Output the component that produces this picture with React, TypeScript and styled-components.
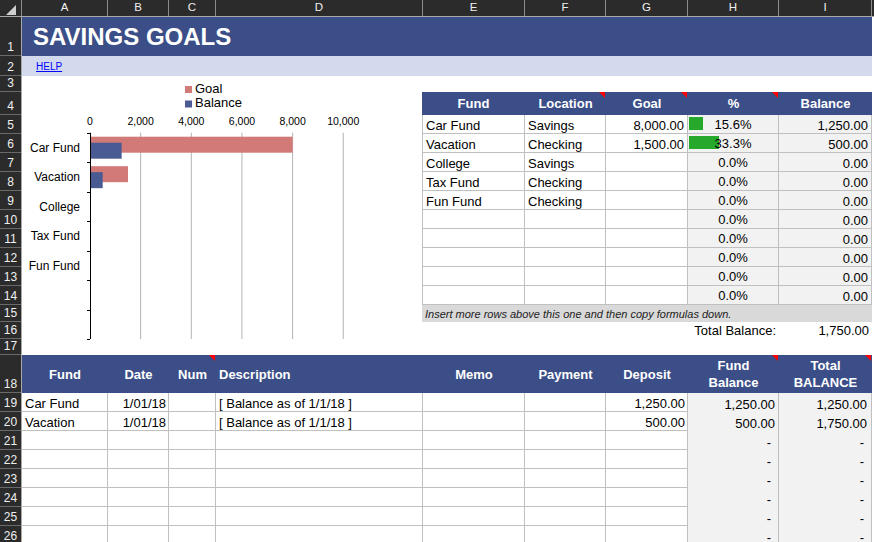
import React from 'react';
import styled, { createGlobalStyle } from 'styled-components';

const GRID = '#c0c0c0';
const NAVY = '#3b4e87';
const SHADE = '#f2f2f2';

const GlobalStyle = createGlobalStyle`
  html, body { margin: 0; padding: 0; background: #fff; overflow: hidden; }
  body { font-family: 'Liberation Sans', Arial, sans-serif; color: #000; }
  * { box-sizing: border-box; }
`;

const COLS = [
  { id: 'A', w: 86 },
  { id: 'B', w: 61 },
  { id: 'C', w: 47 },
  { id: 'D', w: 207 },
  { id: 'E', w: 102 },
  { id: 'F', w: 81 },
  { id: 'G', w: 82 },
  { id: 'H', w: 91 },
  { id: 'I', w: 93 },
  { id: 'J', w: 40 },
];

const ROW_HEIGHTS = [39, 20, 16, 23, 19, 19, 19, 19, 19, 19, 19, 19, 19, 19, 17, 17, 16, 38, 19, 19, 19, 19, 19, 19, 19, 19];

/* ---------- frame & headers ---------- */

const Frame = styled.div`
  width: 874px;
  height: 542px;
  overflow: hidden;
  background: #fff;
  display: flex;
  flex-direction: column;
`;

const ColumnHeaderBar = styled.div`
  display: flex;
  flex: none;
  height: 17px;
  background: #2b2b2b;
  border-bottom: 1px solid #a8a8a8;
`;

const Corner = styled.div`
  width: 22px;
  flex: none;
  display: flex;
  align-items: flex-end;
  justify-content: flex-end;
  padding: 0 5px 1px 0;
  border-right: 1px solid #8c8c8c;
`;

const ColLetter = styled.div<{ $w: number }>`
  width: ${(p) => p.$w}px;
  flex: none;
  display: flex;
  align-items: center;
  justify-content: center;
  border-right: 1px solid #8c8c8c;
  color: #f0f0f0;
  font-size: 11.5px;
  line-height: 1;
`;

const Body = styled.div`
  display: flex;
  flex: 1;
  min-height: 0;
`;

const RowHeaderColumn = styled.div`
  width: 22px;
  flex: none;
  display: flex;
  flex-direction: column;
  background: #2b2b2b;
  border-right: 1px solid #a8a8a8;
`;

const RowNumber = styled.div<{ $h: number }>`
  height: ${(p) => p.$h}px;
  flex: none;
  display: flex;
  align-items: flex-end;
  justify-content: center;
  padding-bottom: 1px;
  border-bottom: 1px solid #6a6a6a;
  color: #f0f0f0;
  font-size: 12px;
  line-height: 14px;
`;

const Content = styled.div`
  width: 850px;
  flex: none;
  display: flex;
  flex-direction: column;
`;

/* ---------- title ---------- */

const TitleBand = styled.div`
  height: 39px;
  flex: none;
  display: flex;
  align-items: center;
  padding-left: 11px;
  background: ${NAVY};
`;

const Title = styled.h1`
  margin: 0;
  color: #fff;
  font-size: 24px;
  font-weight: 700;
  line-height: 1;
  padding-top: 1px;
`;

const HelpBand = styled.div`
  height: 20px;
  flex: none;
  display: flex;
  align-items: center;
  padding-left: 14px;
  background: #d4daed;
`;

const HelpLink = styled.a`
  color: #0000ff;
  font-size: 10px;
  text-decoration: underline;
  cursor: pointer;
`;

/* ---------- middle ---------- */

const MidSection = styled.div`
  display: flex;
  height: 279px;
  flex: none;
`;

const ChartPanel = styled.div`
  width: 400px;
  flex: none;
`;

const FundsPanel = styled.div`
  width: 450px;
  flex: none;
  display: flex;
  flex-direction: column;
  padding-top: 16px;
`;

const FundsGrid = styled.div`
  display: grid;
  grid-template-columns: 103px 81px 82px 91px 93px;
  grid-template-rows: 23px;
  grid-auto-rows: 19px;
`;

const HeadCell = styled.div<{ $align?: 'left' | 'center' }>`
  position: relative;
  display: flex;
  align-items: center;
  justify-content: ${(p) => (p.$align === 'left' ? 'flex-start' : 'center')};
  padding: 0 3px;
  background: ${NAVY};
  color: #fff;
  font-size: 13px;
  font-weight: 700;
  line-height: 17px;
  text-align: center;
  white-space: nowrap;
`;

const Marker = styled.span`
  position: absolute;
  top: 0;
  right: 1px;
  width: 0;
  height: 0;
  border-left: 6px solid transparent;
  border-top: 6px solid #ff0000;
`;

type Align = 'left' | 'right' | 'center';

const Cell = styled.div<{ $align?: Align; $shade?: boolean; $first?: boolean; $open?: boolean; $pad?: number }>`
  position: relative;
  display: flex;
  align-items: flex-end;
  justify-content: ${(p) => (p.$align === 'right' ? 'flex-end' : p.$align === 'center' ? 'center' : 'flex-start')};
  padding: 0 ${(p) => p.$pad ?? 3}px 0 3px;
  background: ${(p) => (p.$shade ? SHADE : '#fff')};
  border-right: 1px solid ${GRID};
  border-bottom: ${(p) => (p.$open ? 'none' : `1px solid ${GRID}`)};
  border-left: ${(p) => (p.$first ? `1px solid ${GRID}` : 'none')};
  font-size: 13px;
  line-height: 14px;
  white-space: nowrap;
  overflow: hidden;
`;

const PercentCell = styled(Cell)`
  align-items: center;
  padding-top: 2px;
`;

const DataBar = styled.span`
  position: absolute;
  left: 1px;
  top: 2px;
  bottom: 3px;
  background: #26a82a;
`;

const PercentText = styled.span`
  position: relative;
`;

const NoteRow = styled.div`
  height: 17px;
  flex: none;
  display: flex;
  align-items: center;
  padding-left: 3px;
  background: #d9d9d9;
  color: #222;
  font-size: 11px;
  font-style: italic;
`;

const TotalRow = styled.div`
  height: 17px;
  flex: none;
  display: grid;
  grid-template-columns: 103px 81px 82px 91px 93px;
  align-items: center;
  font-size: 13px;
`;

const TotalLabel = styled.div`
  grid-column: 4;
  justify-self: end;
  padding-right: 3px;
  white-space: nowrap;
`;

const TotalValue = styled.div`
  grid-column: 5;
  justify-self: end;
  padding-right: 3px;
`;

/* ---------- ledger ---------- */

const LedgerGrid = styled.div`
  display: grid;
  grid-template-columns: 86px 61px 47px 207px 102px 81px 82px 91px 93px;
  grid-template-rows: 38px;
  grid-auto-rows: 19px;
`;

/* ---------- chart ---------- */

const AXIS_X = 68;
const PX_PER_UNIT = 50.65 / 2000;
const PLOT_TOP = 56.7;
const PLOT_BOTTOM = 263;
const BAND = (PLOT_BOTTOM - PLOT_TOP) / 7;
const GOAL_COLOR = '#d27a78';
const BAL_COLOR = '#4a5a93';

const chartData = [
  { name: 'Car Fund', goal: 8000, balance: 1250 },
  { name: 'Vacation', goal: 1500, balance: 500 },
  { name: 'College', goal: 0, balance: 0 },
  { name: 'Tax Fund', goal: 0, balance: 0 },
  { name: 'Fun Fund', goal: 0, balance: 0 },
  { name: '', goal: 0, balance: 0 },
  { name: '', goal: 0, balance: 0 },
];

const ticks = [0, 2000, 4000, 6000, 8000, 10000];

const GoalsChart: React.FC = () => (
  <svg width={400} height={279} viewBox="0 0 400 279" fontFamily="'Liberation Sans', Arial, sans-serif">
    <rect x={163} y={10} width={7} height={7} fill={GOAL_COLOR} />
    <text x={173} y={16.7} fontSize={13} fill="#000">Goal</text>
    <rect x={163} y={24.5} width={7} height={7} fill={BAL_COLOR} />
    <text x={173} y={30.7} fontSize={13} fill="#000">Balance</text>

    {ticks.map((t) => {
      const x = AXIS_X + t * PX_PER_UNIT;
      return (
        <g key={t}>
          <text x={x} y={48.5} fontSize={10.5} textAnchor="middle" fill="#000">
            {t.toLocaleString('en-US')}
          </text>
          {t > 0 && <line x1={x} x2={x} y1={PLOT_TOP} y2={PLOT_BOTTOM} stroke="#b3b3b3" strokeWidth={1} />}
        </g>
      );
    })}

    {chartData.map((d, i) => {
      const top = PLOT_TOP + i * BAND;
      return (
        <g key={i}>
          {d.goal > 0 && (
            <rect x={AXIS_X} y={top + 4} width={d.goal * PX_PER_UNIT} height={16} fill={GOAL_COLOR} />
          )}
          {d.balance > 0 && (
            <rect x={AXIS_X} y={top + 10} width={d.balance * PX_PER_UNIT} height={16} fill={BAL_COLOR} />
          )}
          {d.name && (
            <text x={58} y={top + BAND / 2 + 4.3} fontSize={12} textAnchor="end" fill="#000">
              {d.name}
            </text>
          )}
        </g>
      );
    })}

    {Array.from({ length: 8 }, (_, i) => {
      const y = Math.round(PLOT_TOP + i * BAND) + 0.5;
      return <line key={i} x1={AXIS_X - 3} x2={AXIS_X} y1={y} y2={y} stroke="#000" strokeWidth={1} />;
    })}
    <line x1={AXIS_X + 0.5} x2={AXIS_X + 0.5} y1={PLOT_TOP} y2={PLOT_BOTTOM} stroke="#000" strokeWidth={1} />
  </svg>
);

/* ---------- data ---------- */

type Fund = { fund: string; loc: string; goal: string; pct: number; bal: string };

const funds: Fund[] = [
  { fund: 'Car Fund', loc: 'Savings', goal: '8,000.00', pct: 15.6, bal: '1,250.00' },
  { fund: 'Vacation', loc: 'Checking', goal: '1,500.00', pct: 33.3, bal: '500.00' },
  { fund: 'College', loc: 'Savings', goal: '', pct: 0, bal: '0.00' },
  { fund: 'Tax Fund', loc: 'Checking', goal: '', pct: 0, bal: '0.00' },
  { fund: 'Fun Fund', loc: 'Checking', goal: '', pct: 0, bal: '0.00' },
  ...Array.from({ length: 5 }, () => ({ fund: '', loc: '', goal: '', pct: 0, bal: '0.00' })),
];

type Entry = { fund: string; date: string; desc: string; deposit: string; fundBal: string; total: string };

const entries: Entry[] = [
  { fund: 'Car Fund', date: '1/01/18', desc: '[ Balance as of 1/1/18 ]', deposit: '1,250.00', fundBal: '1,250.00', total: '1,250.00' },
  { fund: 'Vacation', date: '1/01/18', desc: '[ Balance as of 1/1/18 ]', deposit: '500.00', fundBal: '500.00', total: '1,750.00' },
  ...Array.from({ length: 6 }, () => ({ fund: '', date: '', desc: '', deposit: '', fundBal: '-', total: '-' })),
];

const fundHeaders = [
  { label: 'Fund' },
  { label: 'Location', mark: true },
  { label: 'Goal', mark: true },
  { label: '%', mark: true },
  { label: 'Balance' },
];

const ledgerHeaders: { label: React.ReactNode; mark?: boolean; left?: boolean }[] = [
  { label: 'Fund' },
  { label: 'Date' },
  { label: 'Num', mark: true },
  { label: 'Description', left: true },
  { label: 'Memo' },
  { label: 'Payment' },
  { label: 'Deposit' },
  { label: <>Fund<br />Balance</>, mark: true },
  { label: <>Total<br />BALANCE</>, mark: true },
];

const CornerMark: React.FC = () => (
  <svg width={10} height={10} viewBox="0 0 10 10">
    <polygon points="10,0 10,10 0,10" fill="#cfcfcf" />
  </svg>
);

export default function App() {
  return (
    <>
      <GlobalStyle />
      <Frame>
        <ColumnHeaderBar>
          <Corner>
            <CornerMark />
          </Corner>
          {COLS.map((c) => (
            <ColLetter key={c.id} $w={c.w}>
              {c.id === 'J' ? '' : c.id}
            </ColLetter>
          ))}
        </ColumnHeaderBar>
        <Body>
          <RowHeaderColumn>
            {ROW_HEIGHTS.map((h, i) => (
              <RowNumber key={i} $h={h}>
                {i + 1}
              </RowNumber>
            ))}
          </RowHeaderColumn>
          <Content>
            <TitleBand>
              <Title>SAVINGS GOALS</Title>
            </TitleBand>
            <HelpBand>
              <HelpLink>HELP</HelpLink>
            </HelpBand>
            <MidSection>
              <ChartPanel>
                <GoalsChart />
              </ChartPanel>
              <FundsPanel>
                <FundsGrid>
                  {fundHeaders.map((h) => (
                    <HeadCell key={h.label}>
                      {h.label}
                      {h.mark && <Marker />}
                    </HeadCell>
                  ))}
                  {funds.map((f, i) => (
                    <React.Fragment key={i}>
                      <Cell $first>{f.fund}</Cell>
                      <Cell>{f.loc}</Cell>
                      <Cell $align="right">{f.goal}</Cell>
                      <PercentCell $align="center" $shade>
                        {f.pct > 0 && <DataBar style={{ width: `${(f.pct / 100) * 90}px` }} />}
                        <PercentText>{f.pct.toFixed(1)}%</PercentText>
                      </PercentCell>
                      <Cell $align="right" $shade>
                        {f.bal}
                      </Cell>
                    </React.Fragment>
                  ))}
                </FundsGrid>
                <NoteRow>Insert more rows above this one and then copy formulas down.</NoteRow>
                <TotalRow>
                  <TotalLabel>Total Balance:</TotalLabel>
                  <TotalValue>1,750.00</TotalValue>
                </TotalRow>
              </FundsPanel>
            </MidSection>
            <LedgerGrid>
              {ledgerHeaders.map((h, i) => (
                <HeadCell key={i} $align={h.left ? 'left' : 'center'}>
                  <span>{h.label}</span>
                  {h.mark && <Marker />}
                </HeadCell>
              ))}
              {entries.map((e, i) => (
                <React.Fragment key={i}>
                  <Cell $pad={2}>{e.fund}</Cell>
                  <Cell $align="right" $pad={2}>{e.date}</Cell>
                  <Cell />
                  <Cell>{e.desc}</Cell>
                  <Cell />
                  <Cell />
                  <Cell $align="right" $pad={2}>{e.deposit}</Cell>
                  <Cell $align="right" $shade $open $pad={e.fundBal === '-' ? 7 : 3}>
                    {e.fundBal}
                  </Cell>
                  <Cell $align="right" $shade $open $pad={e.total === '-' ? 7 : 4}>
                    {e.total}
                  </Cell>
                </React.Fragment>
              ))}
            </LedgerGrid>
          </Content>
        </Body>
      </Frame>
    </>
  );
}
